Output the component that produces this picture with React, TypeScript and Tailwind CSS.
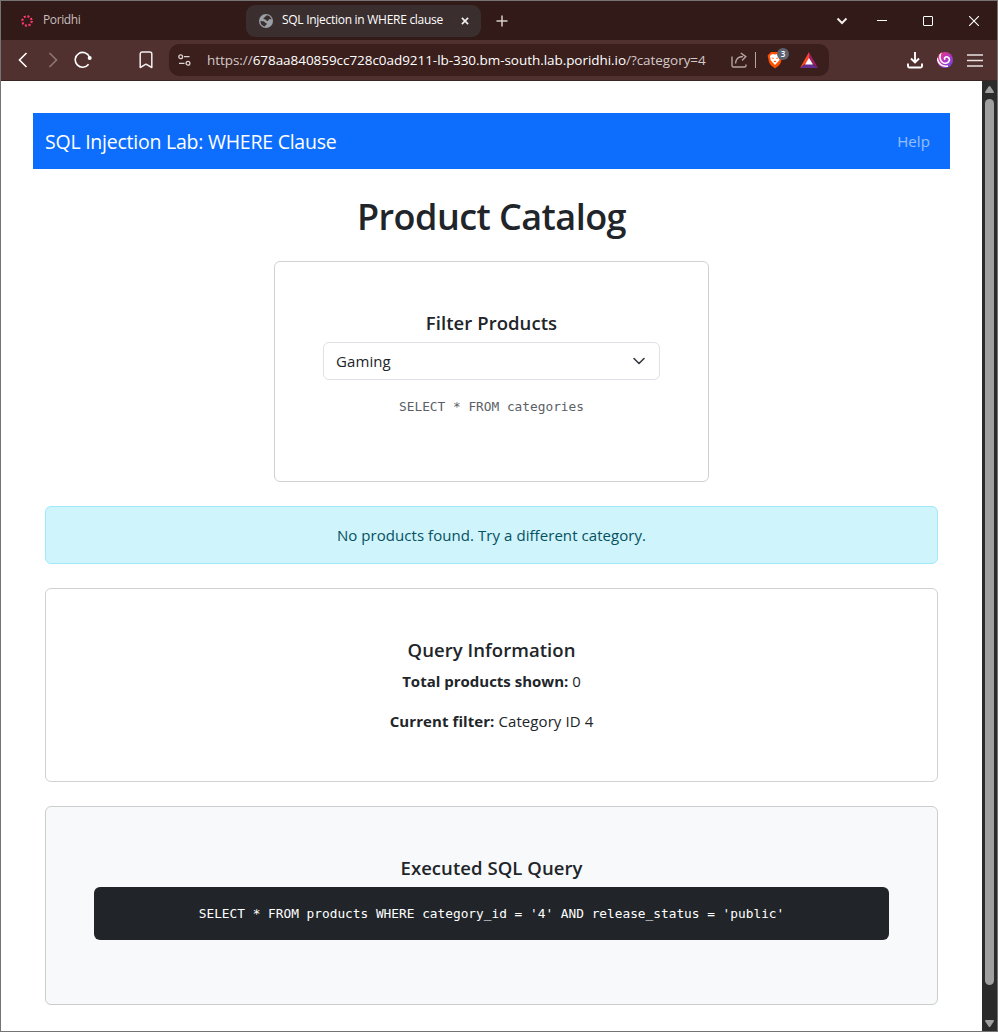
import React from "react";

const ui = "font-['Open_Sans','Noto_Sans',sans-serif]";
const mono = "font-['DejaVu_Sans_Mono','Liberation_Mono',monospace]";

function PoridhiMark() {
  return (
    <svg width="12" height="12" viewBox="0 0 12 12" fill="none" strokeWidth="2.2">
      <circle cx="6" cy="6" r="4.6" stroke="#ee2a6a" strokeDasharray="2 1.61" />
      <circle cx="6" cy="6" r="5" stroke="#f4606a" strokeWidth="1.2" strokeDasharray="1 2.93" />
    </svg>
  );
}

function Globe() {
  return (
    <svg width="14" height="14" viewBox="0 0 14 14">
      <circle cx="7" cy="7" r="7" fill="#9aa0a6" />
      <path d="M8 1.2 C6 2 6.2 3.2 5 3.8 C4 4.4 4.4 5.2 5.6 5.3 C7 5.5 7 6.8 8.4 7 C9.6 7.2 9.3 5.2 10.6 5 L12.6 5.6 A5.8 5.8 0 0 0 8 1.2Z M1.4 7 L4 7.2 C5.8 7.4 6 9 7.4 9.2 C8.6 9.6 7.4 10.8 6.6 11.2 L5.8 12.6 A5.8 5.8 0 0 1 1.4 7Z" fill="#3b2e2e" />
    </svg>
  );
}

function Lion() {
  return (
    <svg width="16" height="18" viewBox="0 0 16 18">
      <path d="M4 1 L12 1 L15.4 4.4 L14 11 Q13.4 13 11.8 14.4 L8 17.6 L4.2 14.4 Q2.6 13 2 11 L0.6 4.4Z" fill="#ff5000" />
      <path d="M2.8 5 L5.2 3 L8 3.6 L10.8 3 L13.2 5 L12.2 9.5 L10.6 11.3 L8 14 L5.4 11.3 L3.8 9.5Z" fill="#fff" />
      <path d="M4.6 6.4 L7 6.9 L6.6 7.8 L5 7.4Z M11.4 6.4 L9 6.9 L9.4 7.8 L11 7.4Z M6.6 10.4 L8 9.6 L9.4 10.4 L8 11.2Z" fill="#ff5000" />
    </svg>
  );
}

function TabBar() {
  return (
    <div className="flex h-[39px] items-center bg-[#311a17] text-white">
      <div className="flex w-[245px] items-center gap-[10px] pl-5 text-[12px] text-[#cbbfbd]">
        <PoridhiMark />
        <span className="-mt-0.5 tracking-[-0.4px]">Poridhi</span>
      </div>
      <div className="flex h-8 w-[235px] items-center rounded-[9px] bg-[#3b2e2e] pl-[13px] pr-3 text-[12px]">
        <Globe />
        <span className="-mt-px ml-[9px] flex-1 whitespace-nowrap tracking-[-0.28px]">SQL Injection in WHERE clause</span>
        <svg width="8" height="8" viewBox="0 0 9 9" stroke="#eee" strokeWidth="1.9"><path d="M1 1L8 8M8 1L1 8" /></svg>
      </div>
      <svg className="ml-[15px]" width="12" height="12" viewBox="0 0 12 12" stroke="#d8cfcd" strokeWidth="1.5"><path d="M6 .5V11.5M.5 6H11.5" /></svg>
      <div className="flex-1" />
      <svg width="12" height="8" viewBox="0 0 12 8" fill="none" stroke="#f0eceb" strokeWidth="2"><path d="M1.5 1.5L6 6L10.5 1.5" /></svg>
      <svg className="ml-[29px]" width="10" height="10" viewBox="0 0 10 10" stroke="#fff"><path d="M0 4.5H10" /></svg>
      <svg className="ml-9" width="10" height="10" viewBox="0 0 10 10" fill="none" stroke="#fff"><rect x=".5" y=".5" width="9" height="9" rx=".5" /></svg>
      <svg className="ml-9 mr-[18px]" width="10" height="10" viewBox="0 0 10 10" stroke="#fff" strokeWidth="1.1"><path d="M0 0L10 10M10 0L0 10" /></svg>
    </div>
  );
}

function ToolBar() {
  return (
    <div className="flex h-[41px] items-center border-b border-[#3c2524] bg-[#51312f]">
      <svg className="ml-[17px]" width="10" height="16" viewBox="0 0 10 16" fill="none" stroke="#fff" strokeWidth="1.6"><path d="M8.5 1L1.5 8L8.5 15" /></svg>
      <svg className="ml-5" width="10" height="16" viewBox="0 0 10 16" fill="none" stroke="#8e7876" strokeWidth="1.6"><path d="M1.5 1L8.5 8L1.5 15" /></svg>
      <svg className="ml-4" width="18" height="18" viewBox="0 0 18 18" fill="none" stroke="#fff" strokeWidth="1.6"><path d="M14.6 13.2A7.4 7.4 0 1 1 15.5 6" /><circle cx="15.7" cy="7" r="2" fill="#fff" stroke="none" /></svg>
      <svg className="ml-[47px]" width="14" height="18" viewBox="0 0 14 18" fill="none" stroke="#f2eeee" strokeWidth="1.5" strokeLinejoin="round"><path d="M1.2 3A2 2 0 0 1 3.2 1H10.8A2 2 0 0 1 12.8 3V16.5L7 13.2L1.2 16.5Z" /></svg>
      <div className="ml-4 flex h-8 w-[660px] items-center rounded-[10px] bg-[#3a1f1d] pl-[10px]">
        <svg className="-ml-px mr-px" width="13" height="12" viewBox="0 0 13 12" fill="none" stroke="#ddd2d0" strokeWidth="1.3"><circle cx="2.7" cy="2.7" r="1.9" /><path d="M6 2.7H11.5M1 9.3H6.5" /><circle cx="10" cy="9.3" r="1.9" /></svg>
        <span className="ml-[15px] mt-px w-[524px] whitespace-nowrap text-[13.5px] tracking-[-0.05px] text-[#d5c9c8]">https://<span className="text-white">678aa840859cc728c0ad9211-lb-330.bm-south.lab.poridhi.io</span>/?category=4</span>
        <svg width="17" height="16" viewBox="0 0 17 16" fill="none" stroke="#b5a5a3" strokeWidth="1.4"><path d="M1 4.5V13.5A1.5 1.5 0 0 0 2.5 15H13.5A1.5 1.5 0 0 0 15 13.5V12.5M4.5 11.5Q5 4.5 12 4.5M9.8 1L14.8 4.7L11 8.5" /></svg>
        <span className="ml-[7px] h-4 w-px bg-[#b5a5a3]" />
        <div className="relative ml-[11px]">
          <Lion />
          <span className="absolute -top-[3px] left-[10px] flex size-3 items-center justify-center rounded-full bg-[#5e616f] text-[8px] leading-none font-semibold text-white">3</span>
        </div>
        <svg className="ml-[17px]" width="18" height="16" viewBox="0 0 18 16"><path d="M9 0L0 16L9 9Z" fill="#ff4724" /><path d="M9 0L18 16L9 9Z" fill="#9e1f63" /><path d="M0 16L9 10L18 16Z" fill="#662d91" /><path d="M9 6L13 12.5H5Z" fill="#fff" /></svg>
      </div>
      <div className="flex-1" />
      <svg width="16" height="17" viewBox="0 0 16 17" fill="none" stroke="#fff" strokeWidth="1.9"><path d="M8 0V10M4 6.5L8 10.5L12 6.5M1 11.5V14A1.5 1.5 0 0 0 2.5 15.5H13.5A1.5 1.5 0 0 0 15 14V11.5" /></svg>
      <svg className="ml-[14px]" width="16" height="16" viewBox="0 0 16 16" fill="none">
        <defs>
          <linearGradient id="leo" x1="0" y1="0" x2="1" y2="1"><stop stopColor="#ff3b6b" /><stop offset=".5" stopColor="#b833c4" /><stop offset="1" stopColor="#5b4fe0" /></linearGradient>
          <clipPath id="leoClip"><circle cx="8" cy="8" r="8" /></clipPath>
        </defs>
        <circle cx="8" cy="8" r="8" fill="url(#leo)" />
        <g clipPath="url(#leoClip)" stroke="#fff" strokeWidth="1.6">
          <path d="M4.2 0C1.4 5.5 3.8 11.3 8.4 11.3C12.4 11.3 13.6 6.8 11 5.2C8.8 4 6.6 6 8 7.8" />
          <path d="M0 6C1 12 5.2 15 11 14" />
        </g>
      </svg>
      <svg className="ml-[14px] mr-[14px]" width="16" height="13" viewBox="0 0 16 13" stroke="#e8e2e1" strokeWidth="1.4"><path d="M0 1H16M0 6.5H16M0 12H16" /></svg>
    </div>
  );
}

function Scrollbar() {
  return (
    <div className="flex w-[15px] flex-col items-center bg-[#2b2b2b]">
      <svg className="mt-[5px]" width="9" height="7" viewBox="0 0 9 7" fill="#9f9f9f"><path d="M3.6 .6Q4.5 -.4 5.4 .6L9 6Q9 7 8 7H1Q0 7 0 6Z" /></svg>
      <div className="mt-[6px] h-[886px] w-[9px] rounded-full bg-[#9f9f9f]" />
      <svg className="mt-[35px]" width="9" height="7" viewBox="0 0 9 7" fill="#9f9f9f"><path d="M3.6 6.4Q4.5 7.4 5.4 6.4L9 1Q9 0 8 0H1Q0 0 0 1Z" /></svg>
    </div>
  );
}

function SectionTitle({ children }: { children: React.ReactNode }) {
  return <h2 className="text-[18.5px] leading-6 font-semibold tracking-[0.06px]">{children}</h2>;
}

export default function App() {
  return (
    <div className={`flex h-[1032px] w-[998px] flex-col overflow-hidden border border-[#747474] bg-white text-[#212529] ${ui}`}>
      <TabBar />
      <ToolBar />
      <div className="flex min-h-0 flex-1">
        <main className="flex w-[981px] flex-col pl-8 pr-8 pt-8">
          <nav className="flex h-14 items-center justify-between bg-[#0d6efd] pl-3 pr-5 text-white">
            <span className="mt-px text-[19.5px] tracking-[-0.24px]">SQL Injection Lab: WHERE Clause</span>
            <span className="text-[15px] tracking-[0.1px] text-white/55">Help</span>
          </nav>
          <div className="flex flex-col px-3 text-center">
            <h1 className="mt-6 h-12 text-[36px] leading-[48px] font-semibold tracking-[-0.55px]">Product Catalog</h1>
            <section className="mx-auto mt-5 flex h-[221px] w-[435px] flex-col rounded-md border border-[#d0d1d2] px-12 pt-[49px]">
              <SectionTitle>Filter Products</SectionTitle>
              <div className="mt-[7px] flex h-[38px] items-center justify-between rounded-md border border-[#dee2e6] pl-3 pr-[14px]">
                <span className="text-[15px] tracking-[0.1px]">Gaming</span>
                <svg width="12" height="8" viewBox="0 0 12 8" fill="none" stroke="#343a40" strokeWidth="1.6" strokeLinecap="round" strokeLinejoin="round"><path d="M1 1.5L6 6.5L11 1.5" /></svg>
              </div>
              <code className={`mt-[17px] text-[12.8px] leading-5 text-[#5c6166] ${mono}`}>SELECT * FROM categories</code>
            </section>
            <div className="mt-6 flex h-[58px] items-center justify-center rounded-md border border-[#9eeaf9] bg-[#cff4fc] text-[15px] tracking-[0.06px] text-[#055160]">No products found. Try a different category.</div>
            <section className="mt-6 h-[194px] rounded-md border border-[#d0d1d2] pt-[49px] text-[15px] leading-6">
              <SectionTitle>Query Information</SectionTitle>
              <p className="mt-[7px]"><b>Total products shown:</b> 0</p>
              <p className="mt-4 tracking-[0.08px]"><b>Current filter:</b> Category ID 4</p>
            </section>
            <section className="mt-6 h-[199px] rounded-md border border-[#cacccd] bg-[#f8f9fa] px-12 pt-[49px]">
              <SectionTitle>Executed SQL Query</SectionTitle>
              <pre className={`mt-[7px] h-[53px] rounded-md bg-[#212529] text-[12.8px] leading-[53px] text-white ${mono}`}>SELECT * FROM products WHERE category_id = '4' AND release_status = 'public'</pre>
            </section>
          </div>
        </main>
        <Scrollbar />
      </div>
    </div>
  );
}
